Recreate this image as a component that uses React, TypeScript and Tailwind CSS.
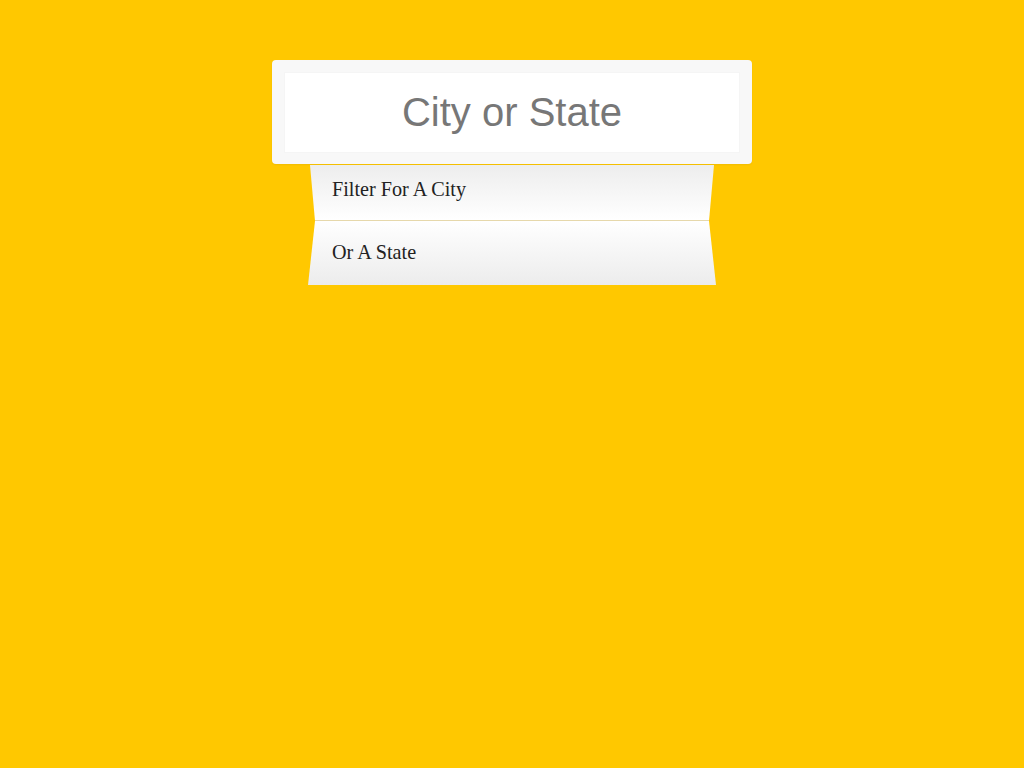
import React from "react";

export default function App() {
  return (
    <div className="min-h-[768px] w-full bg-[#ffc800] flex flex-col items-center pt-[60px]">
      <div className="w-[480px] h-[104px] bg-[#f8f8f8] rounded-[4px] p-[12px] pb-[11px] shadow-[0_1px_2px_rgba(0,0,0,0.06)]">
        <input
          className="w-full h-[81px] bg-white border border-[#f5f5f5] outline-none text-center text-[40px] text-[#777] placeholder:text-[#777] [font-family:'Liberation_Sans',Arial,sans-serif]"
          placeholder="City or State"
        />
      </div>
      <div className="mt-[1px] w-[408px] flex flex-col [font-family:'Liberation_Serif','Times_New_Roman',serif] text-[20.2px] text-[#222]">
        <div className="h-[56px] [clip-path:polygon(2px_0,406px_0,401px_56px,7px_56px)] bg-gradient-to-b from-[#ededed] to-white border-b border-[#e6d8ab] pl-[24px] pt-[12px] leading-[24px]">
          Filter For A City
        </div>
        <div className="h-[64px] [clip-path:polygon(7px_0,401px_0,408px_64px,0_64px)] bg-gradient-to-b from-white to-[#ececec] pl-[24px] pt-[19px] leading-[24px]">
          Or A State
        </div>
      </div>
    </div>
  );
}
